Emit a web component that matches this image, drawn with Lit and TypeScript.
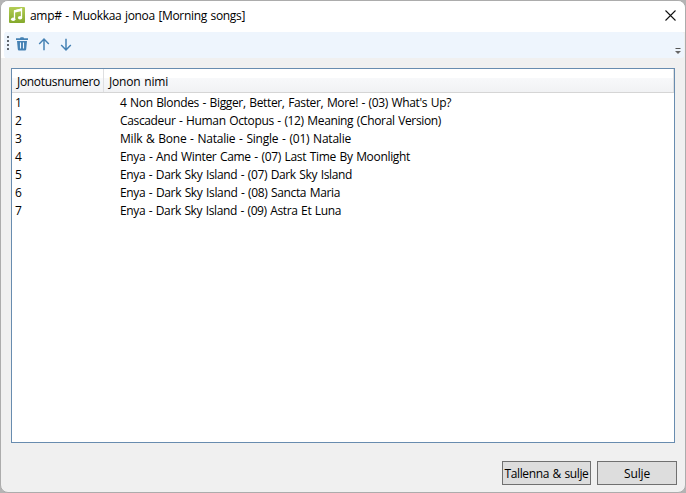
import { LitElement, html, css } from 'lit';
import { customElement, property } from 'lit/decorators.js';

/** One line of text, tracked so that it fills a known width. */
@customElement('fit-text')
class FitText extends LitElement {
  @property() text = '';
  @property({ type: Number }) w = 0;
  static styles = css`
    :host { display: block; white-space: pre; }
    .t { display: inline-block; word-spacing: 0.8px; }
  `;
  firstUpdated() {
    const el = this.renderRoot.querySelector('.t') as HTMLElement;
    const natural = el.getBoundingClientRect().width;
    el.style.letterSpacing = `${(this.w - natural) / this.text.length}px`;
  }
  render() {
    return html`<span class="t">${this.text}</span>`;
  }
}

const SONGS: [string, number][] = [
  ["4 Non Blondes - Bigger, Better, Faster, More! - (03) What's Up?", 331],
  ['Cascadeur - Human Octopus - (12) Meaning (Choral Version)', 321],
  ['Milk & Bone - Natalie - Single - (01) Natalie', 231],
  ['Enya - And Winter Came - (07) Last Time By Moonlight', 290],
  ['Enya - Dark Sky Island - (07) Dark Sky Island', 232],
  ['Enya - Dark Sky Island - (08) Sancta Maria', 220],
  ['Enya - Dark Sky Island - (09) Astra Et Luna', 221],
];

@customElement('app-root')
class AppRoot extends LitElement {
  static styles = css`
    :host { display: block; height: 493px; background: #b4b4b4; overflow: hidden;
      font: 12px/18px "Open Sans", "Noto Sans", sans-serif; color: #000; }
    * { box-sizing: border-box; }
    svg { display: block; flex: none; }
    .window { height: 493px; border: 1px solid #acacac; border-radius: 8px; background: #f0f0f0;
      overflow: hidden; display: flex; flex-direction: column; }
    .title { height: 31px; flex: none; background: #fff; display: flex; align-items: flex-start; padding: 6px 8px 0; }
    .title fit-text { margin: 0 auto 0 5px; }
    .close { margin: 3px 1px 0 0; }
    .tray { height: 26px; flex: none; background: linear-gradient(to right, #fff 4px, #f0f0f0 4px); display: flex; padding-left: 3px; padding-right: 1px; }
    .tools { flex: 1; background: #eef5fd; border-radius: 3px; display: flex; padding-left: 3px; }
    .grip { margin: 4px 7px 0 0; }
    .trash { margin: 5px 10px 0 0; }
    .arrow { margin: 6px 10px 0 0; }
    .more { margin: 16px 3px 0 auto; }
    .list { margin: 10px 10px 0; height: 375px; flex: none; border: 1px solid #688caf; background: #fff; }
    .head { height: 24px; display: flex; border-bottom: 1px solid #d5d5d5;
      background: linear-gradient(#fff 0 40%, #f7f8fa 41%, #f1f2f4); padding-right: 0; line-height: 26px; }
    .c1 { width: 92px; padding-left: 5px; border-right: 1px solid #dedfe1; flex: none; }
    .c2 { flex: 1; padding-left: 5px; border-right: 1px solid #dedfe1; }
    .row { height: 18px; display: flex; line-height: 20px; }
    .num { width: 108px; padding-left: 3px; flex: none; }
    .foot { display: flex; justify-content: flex-end; gap: 6px; padding: 18px 8px 0 0; }
    .btn { height: 24px; border: 1px solid #707070; background: #ddd; display: flex; justify-content: center; line-height: 24px; }
    .save { width: 89px; }
    .shut { width: 80px; }
  `;

  render() {
    return html`
      <div class="window">
        <div class="title">
          <svg width="16" height="16" viewBox="0 0 16 16">
            <defs><linearGradient id="g" x2="0" y2="1"><stop stop-color="#b3cd55"/><stop offset="1" stop-color="#84a92c"/></linearGradient></defs>
            <rect width="16" height="16" rx="1" fill="url(#g)"/>
            <path d="M5.5 12V4l7-2v8.4" fill="none" stroke="#fff" stroke-width="1.3"/>
            <path d="M5 3.2l8-1.9v2.6l-8 1.9z" fill="#fff"/>
            <ellipse cx="4.2" cy="12.2" rx="2.2" ry="1.8" fill="#fff"/>
            <ellipse cx="11.1" cy="10.8" rx="2.2" ry="1.8" fill="#fff"/>
          </svg>
          <fit-text text="amp# - Muokkaa jonoa [Morning songs]" .w=${215}></fit-text>
          <svg class="close" width="11" height="11" viewBox="0 0 11 11"><path d="M.5.5l10 10M10.5.5l-10 10" stroke="#111" stroke-width="1.1"/></svg>
        </div>
        <div class="tray">
          <div class="tools">
            <svg class="grip" width="2" height="14" viewBox="0 0 2 14"><path d="M1 0v14" stroke="#5f666e" stroke-width="2" stroke-dasharray="2 2"/></svg>
            <svg class="trash" width="12" height="14" viewBox="0 0 12 14">
              <path d="M0 1.3h4L4.6.3h2.8l.6 1h4v1.8H0z" fill="#4682b4"/>
              <path d="M1 4h10l-.8 8.3q-.1 1.2-1.2 1.2H3q-1.1 0-1.2-1.2z" fill="#4682b4"/>
              <path d="M4.5 5.5v6M7.5 5.5v6" stroke="#eef5fd" stroke-width="1.1"/>
            </svg>
            <svg class="arrow" width="12" height="13" viewBox="0 0 12 13"><path d="M6 12.3V1.2M1.2 6L6 1.1 10.8 6" fill="none" stroke="#4682b4" stroke-width="1.5"/></svg>
            <svg class="arrow" width="12" height="13" viewBox="0 0 12 13"><path d="M6 .7v11.1M1.2 7L6 11.9 10.8 7" fill="none" stroke="#4682b4" stroke-width="1.5"/></svg>
            <svg class="more" width="6" height="6" viewBox="0 0 6 6"><path d="M0 3h6L3 6z" fill="#666"/><path d="M.5.5h5" stroke="#555"/></svg>
          </div>
        </div>
        <div class="list">
          <div class="head">
            <div class="c1"><fit-text text="Jonotusnumero" .w=${83}></fit-text></div>
            <div class="c2"><fit-text text="Jonon nimi" .w=${59}></fit-text></div>
          </div>
          ${SONGS.map(([name, w], i) => html`
            <div class="row">
              <div class="num">${i + 1}</div>
              <fit-text .text=${name} .w=${w}></fit-text>
            </div>`)}
        </div>
        <div class="foot">
          <div class="btn save"><fit-text text="Tallenna &amp; sulje" .w=${84}></fit-text></div>
          <div class="btn shut"><fit-text text="Sulje" .w=${26}></fit-text></div>
        </div>
      </div>`;
  }
}
